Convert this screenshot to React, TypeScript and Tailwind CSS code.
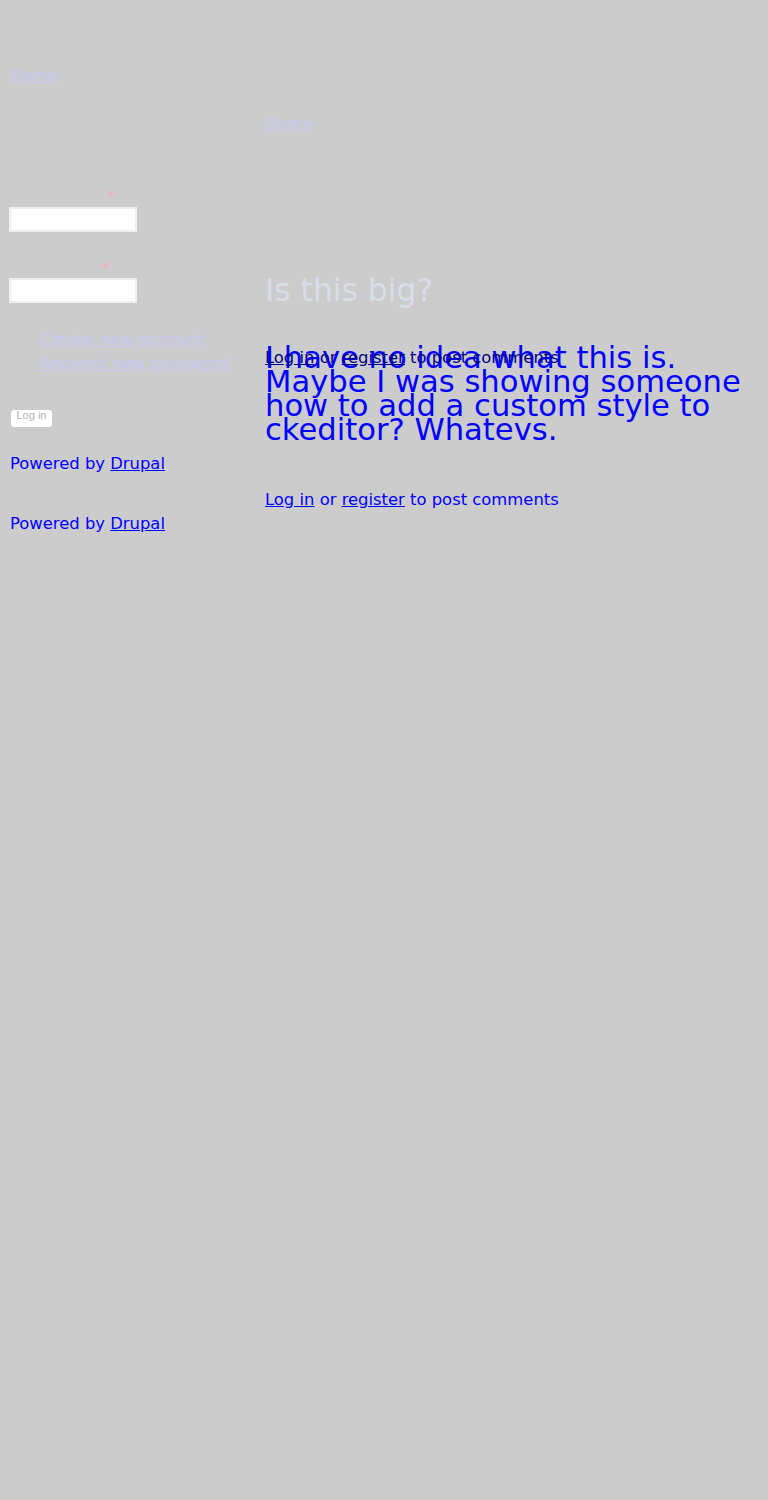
import React from "react";

const sans = "font-['DejaVu_Sans',sans-serif]";

export default function App() {
	return (
		<div className={`min-h-[1500px] w-full bg-[#cccccc] flex ${sans}`}>
			{/* Sidebar */}
			<div className="w-[255px] shrink-0 pl-[10px] flex flex-col">
				<a href="#" className="mt-[66px] text-[16.4px] leading-[20px] text-[#c8c8f2] underline self-start">
					Home
				</a>

				{/* Login form */}
				<div className="mt-[101px] flex flex-col">
					<label className="text-[16px] leading-[20px] font-bold text-[#cccccc]">
						Username <span className="text-[#f0b4b4] font-normal">*</span>
					</label>
					<input className="mt-[0px] ml-[-1px] w-[128px] h-[25px] bg-white border-2 border-[#eeeeee]" />
					<label className="mt-[27px] text-[16px] leading-[20px] font-bold text-[#cccccc]">
						Password <span className="text-[#f0b4b4] font-normal">*</span>
					</label>
					<input type="password" className="mt-[-1px] ml-[-1px] w-[128px] h-[25px] bg-white border-2 border-[#eeeeee]" />
					<ul className="mt-[25px] pl-[30px] flex flex-col">
						<li className="leading-[24px]">
							<a href="#" className="text-[16.4px] text-[#c8c8f2] underline">Create new account</a>
						</li>
						<li className="leading-[24px]">
							<a href="#" className="text-[16.4px] text-[#c8c8f2] underline">Request new password</a>
						</li>
					</ul>
					<button className="mt-[34px] ml-[1px] w-[41px] h-[17px] bg-white rounded-[3px] text-[11px] leading-[10px] text-[#b4b4b4] font-['Liberation_Sans',sans-serif] flex justify-center items-start">
						Log in
					</button>
				</div>

				<p className="mt-[27px] text-[16.4px] leading-[20px] text-[#0000ff]">
					Powered by <a href="#" className="underline">Drupal</a>
				</p>
				<p className="mt-[40px] text-[16.4px] leading-[20px] text-[#0000ff]">
					Powered by <a href="#" className="underline">Drupal</a>
				</p>
			</div>

			{/* Main */}
			<div className="flex-1 pl-[10px] pr-[20px] flex flex-col">
				<a href="#" className="mt-[114px] text-[16px] leading-[20px] text-[#c8c8f2] underline self-start font-['DejaVu_Serif',serif]">
					Home
				</a>
				<h1 className="mt-[136px] text-[31.4px] leading-[40px] text-[#d8dee9]">Is this big?</h1>

				<div className="relative mt-[36px]">
					<p className="text-[30.6px] leading-[24px] text-[#0000ff]">
						I have no idea what this is. Maybe I was showing someone how to add a custom style to ckeditor? Whatevs.
					</p>
					<p className="absolute left-0 top-[2px] text-[16.4px] leading-[20px] text-[#000080] whitespace-nowrap">
						<a href="#" className="underline">Log in</a> or <a href="#" className="underline">register</a> to post comments
					</p>
				</div>

				<p className="mt-[48px] text-[16.4px] leading-[20px] text-[#0000ff]">
					<a href="#" className="underline">Log in</a> or <a href="#" className="underline">register</a> to post comments
				</p>
			</div>
		</div>
	);
}
